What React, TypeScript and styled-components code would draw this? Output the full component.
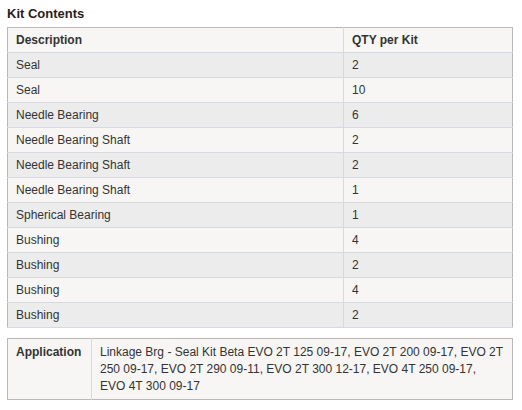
import React from "react";
import styled, { createGlobalStyle } from "styled-components";

const Global = createGlobalStyle`
  body { margin: 0; background: #fff; font-family: Arial, "Liberation Sans", sans-serif; }
`;

const Wrap = styled.div`
  padding: 5px 9px 0 7px;
  width: 506px;
`;

const Title = styled.h3`
  margin: 0 0 5px;
  font-size: 13px;
  font-weight: bold;
  color: #2a1e1c;
  line-height: 17px;
`;

const Table = styled.table`
  width: 506px;
  border-collapse: collapse;
  border: 1px solid #b8b8b8;
  font-size: 12px;
  color: #333;
`;

const Row = styled.tr<{ $alt?: boolean }>`
  background: ${(p) => (p.$alt ? "#ececec" : "#f7f6f4")};
`;

const Cell = styled.td<{ $head?: boolean; $w?: string }>`
  height: 24px;
  padding: 0 0 0 8px;
  border-bottom: 1px solid #d6dae0;
  font-weight: ${(p) => (p.$head ? "bold" : "normal")};
  ${(p) => (p.$w ? `width: ${p.$w};` : "")}
  & + & { border-left: 1px solid #d6dae0; }
`;

const AppTable = styled.table`
  margin-top: 10px;
  width: 506px;
  border-collapse: collapse;
  border: 1px solid #b8b8b8;
  background: #f7f6f4;
  font-size: 12px;
  color: #333;
`;

const AppLabel = styled.th`
  width: 67px;
  padding: 5px 8px 4px;
  text-align: left;
  vertical-align: top;
  font-weight: bold;
  line-height: 17px;
  border-right: 1px solid #d6dae0;
`;

const AppValue = styled.td`
  padding: 5px 8px 4px;
  line-height: 17px;
  vertical-align: top;
`;

const rows: [string, string][] = [
  ["Seal", "2"],
  ["Seal", "10"],
  ["Needle Bearing", "6"],
  ["Needle Bearing Shaft", "2"],
  ["Needle Bearing Shaft", "2"],
  ["Needle Bearing Shaft", "1"],
  ["Spherical Bearing", "1"],
  ["Bushing", "4"],
  ["Bushing", "2"],
  ["Bushing", "4"],
  ["Bushing", "2"],
];

export default function App() {
  return (
    <Wrap>
      <Global />
      <Title>Kit Contents</Title>
      <Table>
        <tbody>
          <Row>
            <Cell $head $w="327px">Description</Cell>
            <Cell $head>QTY per Kit</Cell>
          </Row>
          {rows.map(([d, q], i) => (
            <Row key={i} $alt={i % 2 === 0}>
              <Cell>{d}</Cell>
              <Cell>{q}</Cell>
            </Row>
          ))}
        </tbody>
      </Table>
      <AppTable>
        <tbody>
          <tr>
            <AppLabel>Application</AppLabel>
            <AppValue>
              Linkage Brg - Seal Kit Beta EVO 2T 125 09-17, EVO 2T 200 09-17, EVO 2T 250 09-17, EVO 2T 290 09-11, EVO 2T 300 12-17, EVO 4T 250 09-17, EVO 4T 300 09-17
            </AppValue>
          </tr>
        </tbody>
      </AppTable>
    </Wrap>
  );
}
